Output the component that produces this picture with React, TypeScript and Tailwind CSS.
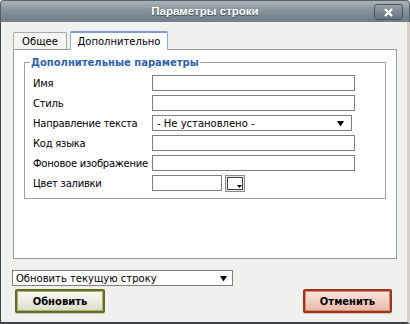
import React from "react";

const FIELDS = [
  { label: "Имя", kind: "text" },
  { label: "Стиль", kind: "text" },
  { label: "Направление текста", kind: "select" },
  { label: "Код языка", kind: "text" },
  { label: "Фоновое изображение", kind: "text" },
  { label: "Цвет заливки", kind: "color" },
];

function Arrow() {
  return (
    <svg width="7" height="7" viewBox="0 0 7 7" className="shrink-0">
      <path d="M0 1h7L3.5 6.5z" fill="#000" />
    </svg>
  );
}

export default function App() {
  return (
    <div className="w-[410px] h-[324px] flex flex-col bg-white font-['DejaVu_Sans',sans-serif] text-[10px] text-black">
      {/* title bar */}
      <div className="h-[22px] shrink-0 relative flex items-center justify-center rounded-t-[4px] bg-gradient-to-b from-[#a9b3bb] via-[#838f99] to-[#717d88] border border-b-0 border-[#55606a]">
        <span className="font-['Liberation_Sans',sans-serif] font-bold text-[11.5px] text-white [text-shadow:0_1px_1px_#3d4750]">
          Параметры строки
        </span>
        <div className="absolute right-[6px] top-[3px] w-[29px] h-[16px] rounded-[3px] border border-[#4b555e] bg-gradient-to-b from-[#97a2ab] to-[#66727c] flex items-center justify-center">
          <svg width="9" height="9" viewBox="0 0 9 9">
            <path d="M1 1l7 7M8 1L1 8" stroke="#fff" strokeWidth="2.4" />
          </svg>
        </div>
      </div>

      {/* body */}
      <div className="flex-1 flex flex-col bg-[#f0f0ee] border-l border-l-[#3c444b] border-r-[3px] border-r-[#d8d0c4] border-b-[2px] border-b-[#3c444b] px-[12px] pt-[9px]">
        {/* tabs */}
        <div className="flex items-end gap-[3px] h-[18px]">
          <div className="h-[17px] w-[54px] flex items-center justify-center bg-[#f4f4f2] border border-b-0 border-[#a7a9ab] rounded-t-[2px]">
            Общее
          </div>
          <div className="h-[19px] w-[98px] -mb-px relative flex items-center justify-center bg-white border border-b-0 border-[#8da8cf] border-t-[2px] border-t-[#7b9dd0] rounded-t-[2px]">
            Дополнительно
          </div>
        </div>

        {/* panel */}
        <div className="h-[210px] w-[384px] bg-white border border-[#919b9c] px-[10px] pt-[5px]">
          <fieldset className="border border-[#a0a0a0] pl-[8px] pb-[7px] pt-[5px]">
            <legend className="ml-[-3px] px-[1px] font-bold text-[#2f62a9]">
              Дополнительные параметры
            </legend>
            <div className="flex flex-col gap-[4px]">
              {FIELDS.map((f) => (
                <div key={f.label} className="flex items-center h-[16px]">
                  <span className="w-[119px] shrink-0 whitespace-nowrap tracking-[-0.25px]">{f.label}</span>
                  {f.kind === "text" && (
                    <div className="w-[203px] h-[16px] border border-[#7f7f7f] bg-white" />
                  )}
                  {f.kind === "select" && (
                    <div className="w-[200px] h-[16px] border border-[#7f7f7f] bg-white flex items-center justify-between pl-[4px] pr-[7px]">
                      <span>- Не установлено -</span>
                      <Arrow />
                    </div>
                  )}
                  {f.kind === "color" && (
                    <div className="flex items-center gap-[3px]">
                      <div className="w-[70px] h-[16px] border border-[#7f7f7f] bg-white" />
                      <div className="relative w-[20px] h-[17px] border border-[#8a8a8a] bg-[#e6e6e6] p-[1px]">
                        <div className="w-full h-full bg-white border border-[#444]" />
                        <svg width="5" height="4" viewBox="0 0 5 4" className="absolute right-[2px] bottom-[2px]">
                          <path d="M0 0h5L2.5 3z" fill="#000" />
                        </svg>
                      </div>
                    </div>
                  )}
                </div>
              ))}
            </div>
          </fieldset>
        </div>

        {/* action select */}
        <div className="mt-[11px] ml-[-1px] w-[221px] h-[16px] border border-[#7f7f7f] bg-white flex items-center justify-between pl-[3px] pr-[5px]">
          <span>Обновить текущую строку</span>
          <Arrow />
        </div>

        {/* buttons */}
        <div className="mt-[3px] flex justify-between px-[2px]">
          <button className="w-[90px] h-[24px] rounded-[2px] border-[2px] border-[#5f6e24] bg-gradient-to-b from-[#fbfbf6] via-[#ecece2] to-[#d9dbc8] font-bold text-[10px] text-black shadow-[inset_0_0_0_1px_#a9b46c,0_1px_0_#c8c8c0]">
            Обновить
          </button>
          <button className="w-[89px] h-[24px] mr-[1px] rounded-[2px] border-[2px] border-[#9e321b] bg-gradient-to-b from-[#fbe6df] via-[#f2cfc3] to-[#e7b8a8] font-bold text-[10px] text-black shadow-[inset_0_0_0_1px_#d98a73,0_1px_0_#c8c8c0]">
            Отменить
          </button>
        </div>
      </div>
    </div>
  );
}
